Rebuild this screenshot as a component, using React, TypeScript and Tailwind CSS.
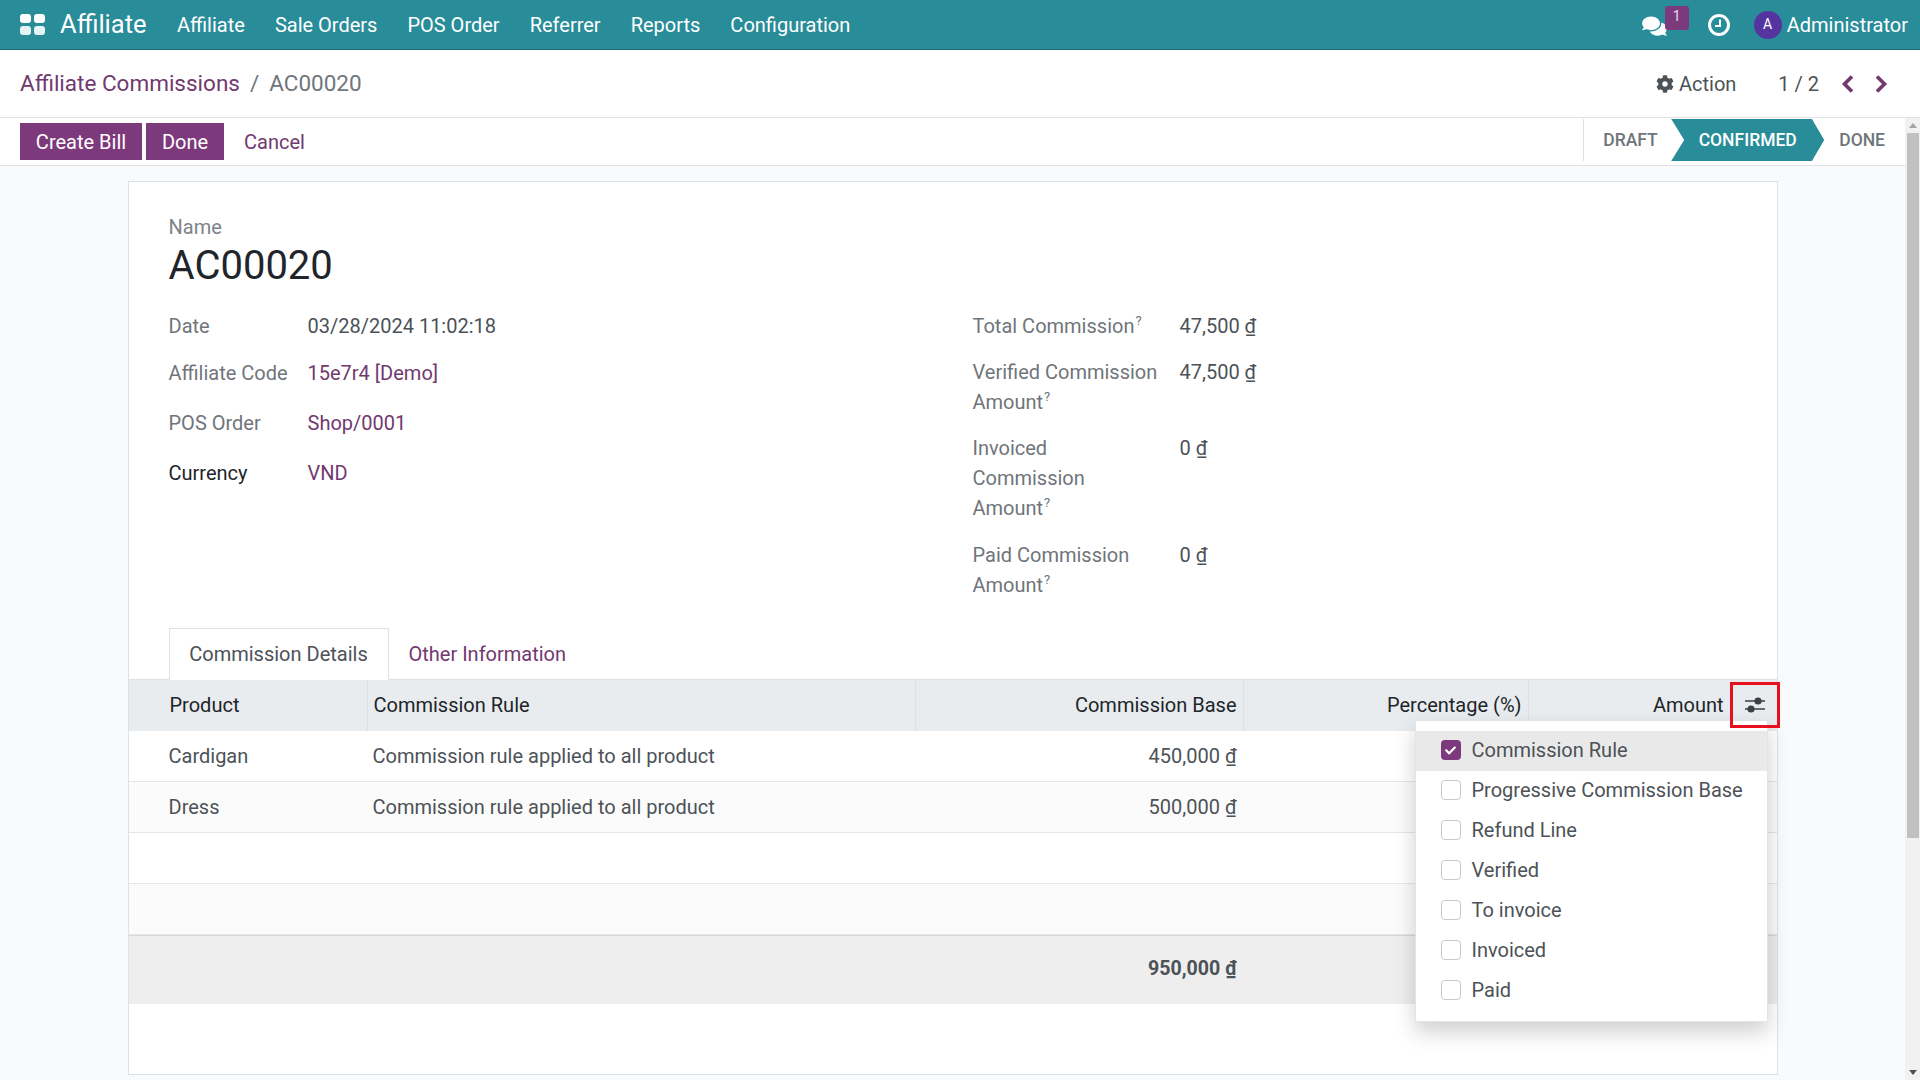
import React from "react";
import { FaComments, FaCog, FaCheck } from "react-icons/fa";

const menu = ["Affiliate", "Sale Orders", "POS Order", "Referrer", "Reports", "Configuration"];
const options = ["Commission Rule", "Progressive Commission Base", "Refund Line", "Verified", "To invoice", "Invoiced", "Paid"];

function Sup() {
  return <sup className="text-[13px] ml-[1px] -top-[8px] relative align-baseline leading-none">?</sup>;
}

function LeftField({ label, value, link, dark, h }: { label: string; value: string; link?: boolean; dark?: boolean; h: string }) {
  return (
    <div className={`flex ${h}`}>
      <div className={`w-[139px] leading-[30px] ${dark ? "text-[#212529]" : "text-[#6f757b]"}`}>{label}</div>
      <div className={`leading-[30px] ${link ? "text-[#71396f]" : "text-[#4c5257]"}`}>{value}</div>
    </div>
  );
}

function RightField({ children, value, pb }: { children: React.ReactNode; value: string; pb: string }) {
  return (
    <div className={`flex ${pb}`}>
      <div className="w-[207px] text-[#6f757b] leading-[30px]">{children}</div>
      <div className="text-[#4c5257] leading-[30px]">{value}</div>
    </div>
  );
}

function Row({ a, b, c, alt }: { a?: string; b?: string; c?: string; alt?: boolean }) {
  return (
    <div className={`flex h-[51px] items-center border-b border-[#e4e6e8] text-[#4c5257] ${alt ? "bg-[#fbfbfb]" : "bg-white"}`}>
      <div className="w-[239px] pl-[40px]">{a}</div>
      <div className="w-[548px] pl-[5px]">{b}</div>
      <div className="w-[328px] pr-[7px] text-right">{c}</div>
    </div>
  );
}

function Chevron({ left }: { left?: boolean }) {
  return (
    <svg width="14" height="20" viewBox="0 0 14 20" fill="none" className="text-[#71396f]">
      <path d={left ? "M11 2.5 L3.5 10 L11 17.5" : "M3 2.5 L10.5 10 L3 17.5"} stroke="currentColor" strokeWidth="3.6" />
    </svg>
  );
}

export default function App() {
  return (
    <div className="h-screen w-[1920px] overflow-hidden flex flex-col bg-white text-[20px] font-['Roboto',sans-serif] text-[#4c5257]">
      {/* Navbar */}
      <header className="h-[50px] shrink-0 bg-[#288c99] border-b border-[#1f6d78] flex items-center text-white">
        <div className="ml-[20px] grid grid-cols-2 gap-[3px] w-[25px] h-[21px]">
          <span className="bg-white rounded-[3px]" />
          <span className="bg-white rounded-[3px]" />
          <span className="bg-[#e4f3f5] rounded-[3px]" />
          <span className="bg-[#e4f3f5] rounded-[3px]" />
        </div>
        <span className="ml-[15px] text-[25.5px] w-[117px]">Affiliate</span>
        <nav className="flex gap-[30px] pt-[1px]">
          {menu.map((m) => (
            <span key={m}>{m}</span>
          ))}
        </nav>
        <div className="ml-auto flex items-center">
          <div className="relative w-[25px] h-[30px] flex items-center">
            <FaComments className="w-[26px] h-[22px] mt-[2px]" />
            <span className="absolute left-[23px] -top-[4px] w-[24px] h-[24px] rounded-[3px] bg-[#7c3a7d] text-[14px] text-center leading-[20px] text-[#e8dbe8]">1</span>
          </div>
          <svg width="24" height="24" viewBox="0 0 24 24" fill="none" className="ml-[40px] text-white">
            <circle cx="12" cy="12" r="9.5" stroke="currentColor" strokeWidth="3" />
            <path d="M13 6.5V13H8" stroke="currentColor" strokeWidth="2" />
          </svg>
          <span className="ml-[23px] w-[28px] h-[28px] rounded-full bg-[#5534a0] text-[14px] flex items-center justify-center">A</span>
          <span className="ml-[5px] mr-[12px] leading-none">Administrator</span>
        </div>
      </header>

      {/* Breadcrumb */}
      <div className="h-[68px] shrink-0 border-b border-[#dee2e6] flex items-center pl-[20px]">
        <span className="text-[22.5px] text-[#71396f]">Affiliate Commissions</span>
        <span className="text-[22.5px] text-[#6f757b] mx-[10px]">/</span>
        <span className="text-[22.5px] text-[#6f757b]">AC00020</span>
        <div className="ml-auto flex items-center text-[#4c5257]">
          <FaCog className="w-[18px] h-[18px]" />
          <span className="ml-[5px]">Action</span>
          <span className="ml-[42px]">1 / 2</span>
          <span className="ml-[22px]"><Chevron left /></span>
          <span className="ml-[19px] mr-[32px]"><Chevron /></span>
        </div>
      </div>

      <div className="flex-1 flex min-h-0">
        <div className="flex-1 min-w-0 flex flex-col bg-[#f9fafb]">
          {/* Buttons + status */}
          <div className="h-[48px] shrink-0 bg-white border-b border-[#dee2e6] flex items-start pl-[20px]">
            <button className="mt-[5px] h-[37px] w-[122px] pt-[1px] bg-[#7c3a7d] text-white">Create Bill</button>
            <button className="mt-[5px] ml-[4px] h-[37px] w-[78px] pt-[1px] bg-[#7c3a7d] text-white">Done</button>
            <span className="mt-[6px] ml-[20px] leading-[37px] text-[#71396f]">Cancel</span>
            <div className="ml-auto mt-[1px] h-[42px] flex items-center text-[17.5px] font-medium text-[#6f757b]">
              <div className="h-full border-l border-[#dee2e6] pl-[19px] w-[88px] leading-[42px]">DRAFT</div>
              <div className="w-[153px] h-full bg-[#288c99] text-white flex items-center justify-center [clip-path:polygon(0_0,92%_0,100%_50%,92%_100%,0_100%,8.5%_50%)]">CONFIRMED</div>
              <div className="ml-[15px] mr-[20px]">DONE</div>
            </div>
          </div>

          {/* Sheet */}
          <div className="flex-1 min-h-0 pt-[15px]">
            <div className="relative w-[1650px] h-[894px] mx-auto bg-white border border-[#dee2e6]">
              <div className="pl-[40px] pt-[30px]">
                <div className="text-[#7d8389] leading-[30px]">Name</div>
                <div className="mt-[2px] text-[40px] leading-[44px] text-[#212529]">AC00020</div>
                <div className="flex mt-[23px]">
                  <div className="w-[804px] h-[317px]">
                    <LeftField label="Date" value="03/28/2024 11:02:18" h="h-[47px]" />
                    <LeftField label="Affiliate Code" value="15e7r4 [Demo]" link h="h-[50px]" />
                    <LeftField label="POS Order" value="Shop/0001" link h="h-[50px]" />
                    <LeftField label="Currency" value="VND" link dark h="h-[50px]" />
                  </div>
                  <div>
                    <RightField value="47,500 ₫" pb="pb-[16px]">Total Commission<Sup /></RightField>
                    <RightField value="47,500 ₫" pb="pb-[16px]">Verified Commission<br />Amount<Sup /></RightField>
                    <RightField value="0 ₫" pb="pb-[17px]">Invoiced<br />Commission<br />Amount<Sup /></RightField>
                    <RightField value="0 ₫" pb="pb-0">Paid Commission<br />Amount<Sup /></RightField>
                  </div>
                </div>
              </div>

              {/* Tabs */}
              <div className="h-[52px] border-b border-[#dee2e6] pl-[40px] flex">
                <div className="w-[220px] h-[52px] pb-[2px] bg-white border border-b-0 border-[#dee2e6] flex items-center justify-center">Commission Details</div>
                <div className="ml-[20px] leading-[53px] text-[#71396f]">Other Information</div>
              </div>

              {/* Table */}
              <div className="flex h-[51px] items-center bg-[#e9ecef] text-[#212529]">
                <div className="w-[239px] h-full pl-[41px] pb-[2px] flex items-center border-r border-[#dee2e6]">Product</div>
                <div className="w-[548px] h-full pl-[6px] pb-[2px] flex items-center border-r border-[#dee2e6]">Commission Rule</div>
                <div className="w-[328px] h-full pr-[6px] pb-[2px] flex items-center justify-end border-r border-[#dee2e6]">Commission Base</div>
                <div className="w-[285px] h-full pr-[6px] pb-[2px] flex items-center justify-end border-r border-[#dee2e6]">Percentage (%)</div>
                <div className="w-[195px] h-full pb-[2px] flex items-center justify-end">Amount</div>
              </div>
              <Row a="Cardigan" b="Commission rule applied to all product" c="450,000 ₫" />
              <Row a="Dress" b="Commission rule applied to all product" c="500,000 ₫" alt />
              <Row />
              <Row alt />
              <div className="h-[69px] pb-[2px] bg-[#eeeeee] border-t border-[#d5d7da] flex items-center">
                <div className="w-[1115px] pr-[7px] text-right text-[19.6px] font-bold text-[#4c5257]">950,000 ₫</div>
              </div>

              {/* Dropdown */}
              <div className="absolute left-[1286px] top-[538px] w-[353px] h-[302px] bg-white border border-[#e2e4e6] shadow-[0_10px_20px_rgba(0,0,0,0.19)] pt-[10px] z-10">
                {options.map((o, i) => (
                  <div key={o} className={`h-[40px] pb-[2px] flex items-center pl-[25px] text-[#4c5257] ${i === 0 ? "bg-[#e9e9e9]" : ""}`}>
                    {i === 0 ? (
                      <span className="w-[20px] h-[20px] rounded-[4px] bg-[#7c3a7d] flex items-center justify-center">
                        <FaCheck className="w-[11px] h-[11px] text-white" />
                      </span>
                    ) : (
                      <span className="w-[20px] h-[20px] rounded-[4px] bg-white border border-[#c6c9cc]" />
                    )}
                    <span className="ml-[11px]">{o}</span>
                  </div>
                ))}
              </div>

              {/* Optional-column toggle with highlight */}
              <div className="absolute left-[1601px] top-[500px] w-[50px] h-[46px] border-[3px] border-[#e8101c] flex items-center justify-center z-20">
                <svg width="22" height="18" viewBox="0 0 22 18" fill="none" className="text-[#3a4046]">
                  <path d="M1 5H21M1 13H21" stroke="currentColor" strokeWidth="1.6" />
                  <circle cx="14" cy="5" r="3.6" fill="currentColor" />
                  <circle cx="7" cy="13" r="3.6" fill="currentColor" />
                </svg>
              </div>
            </div>
          </div>
        </div>

        {/* Scrollbar */}
        <div className="w-[15px] shrink-0 bg-[#f1f1f1] flex flex-col items-center relative">
          <span className="mt-[5px] w-0 h-0 border-x-[4px] border-x-transparent border-b-[5px] border-b-[#a3a3a3]" />
          <div className="mt-[5px] w-[12px] h-[705px] bg-[#c1c1c1]" />
          <span className="mt-auto mb-[5px] w-0 h-0 border-x-[4px] border-x-transparent border-t-[5px] border-t-[#505050]" />
        </div>
      </div>
    </div>
  );
}
